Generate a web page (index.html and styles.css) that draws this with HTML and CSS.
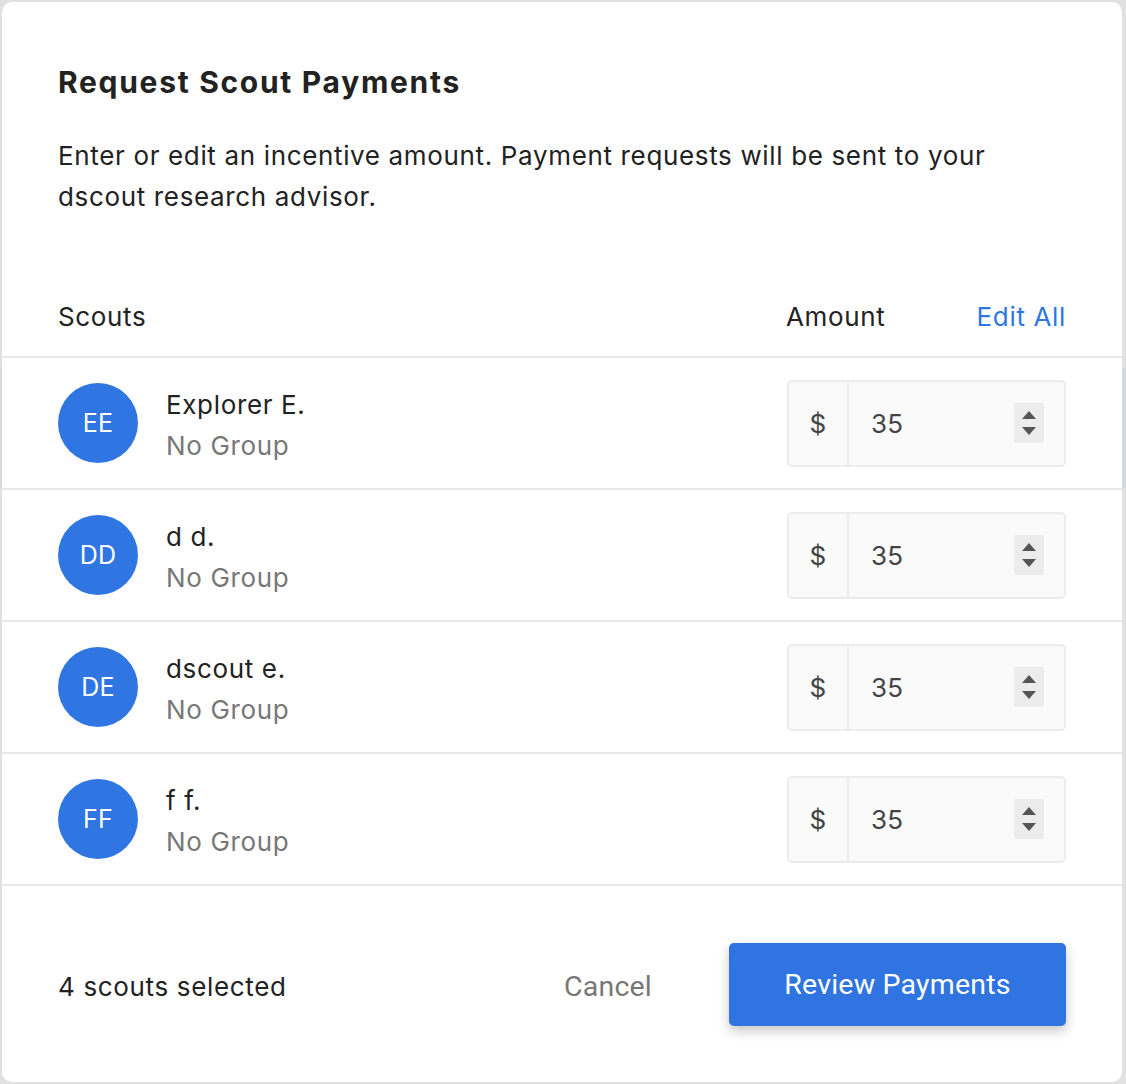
FILE: index.html
```html
<!DOCTYPE html>
<html lang="en">
<head>
<meta charset="utf-8">
<title>Request Scout Payments</title>
<link rel="stylesheet" href="styles.css">
</head>
<body>
<div class="modal">
  <div class="intro">
    <h1 class="title">Request Scout Payments</h1>
    <p class="desc">Enter or edit an incentive amount. Payment requests will be sent to your dscout research advisor.</p>
  </div>
  <div class="table-head">
    <span class="col-scouts">Scouts</span>
    <div class="col-amount">
      <span>Amount</span>
      <a class="edit-all" href="#">Edit All</a>
    </div>
  </div>
  <ul class="rows">
    <li class="row">
      <div class="avatar">EE</div>
      <div class="who"><div class="name">Explorer E.</div><div class="group">No Group</div></div>
      <div class="amount-input"><span class="prefix">$</span><span class="value">35</span><span class="spin"><i class="up"></i><i class="down"></i></span></div>
    </li>
    <li class="row">
      <div class="avatar">DD</div>
      <div class="who"><div class="name">d d.</div><div class="group">No Group</div></div>
      <div class="amount-input"><span class="prefix">$</span><span class="value">35</span><span class="spin"><i class="up"></i><i class="down"></i></span></div>
    </li>
    <li class="row">
      <div class="avatar">DE</div>
      <div class="who"><div class="name">dscout e.</div><div class="group">No Group</div></div>
      <div class="amount-input"><span class="prefix">$</span><span class="value">35</span><span class="spin"><i class="up"></i><i class="down"></i></span></div>
    </li>
    <li class="row">
      <div class="avatar">FF</div>
      <div class="who"><div class="name">f f.</div><div class="group">No Group</div></div>
      <div class="amount-input"><span class="prefix">$</span><span class="value">35</span><span class="spin"><i class="up"></i><i class="down"></i></span></div>
    </li>
  </ul>
  <div class="footer">
    <span class="selected">4 scouts selected</span>
    <div class="actions">
      <button class="cancel">Cancel</button>
      <button class="primary">Review Payments</button>
    </div>
  </div>
</div>
</body>
</html>
```

FILE: styles.css
```css
* { box-sizing: border-box; }
html, body { margin: 0; padding: 0; }
body {
  padding: 2px 4px 2px 2px;
  height: 1084px;
  background: linear-gradient(to bottom, #e1e1e1 0, #e1e1e1 368px, #d3d8e1 368px, #d3d8e1 488px, #e1e1e1 488px);
  font-family: Inter, "Noto Sans", sans-serif;
  color: #222;
  letter-spacing: 0.65px;
}
.modal {
  width: 1120px;
  height: 1080px;
  background: #fff;
  border-radius: 10px;
  overflow: hidden;
  display: flex;
  flex-direction: column;
}
.intro { padding: 62px 57px 0 56px; }
.title {
  margin: 0;
  font-size: 30px;
  line-height: 36px;
  font-weight: 700;
  color: #222;
  letter-spacing: 1.7px;
}
.desc {
  margin: 35px 0 0;
  font-size: 26px;
  line-height: 41px;
  color: #222;
  max-width: 960px;
}
.table-head {
  display: flex;
  justify-content: space-between;
  align-items: center;
  padding: 79px 56px 19px 56px;
  font-size: 26px;
  line-height: 41px;
}
.col-amount {
  width: 280px;
  display: flex;
  justify-content: space-between;
}
.edit-all { color: #2f78e4; text-decoration: none; }
.rows { list-style: none; margin: 0; padding: 0; }
.row {
  display: flex;
  align-items: center;
  height: 132px;
  border-top: 2px solid #e8e8e8;
  padding: 0 56px 0 56px;
}
.avatar {
  width: 80px;
  height: 80px;
  border-radius: 50%;
  background: #2f76e2;
  color: #fff;
  display: flex;
  align-items: center;
  justify-content: center;
  font-size: 25px;
  letter-spacing: 0.3px;
  flex: none;
}
.who { margin-left: 28px; padding-top: 3px; flex: 1; font-size: 26px; line-height: 41px; }
.name { color: #222; }
.group { color: #777; }
.amount-input {
  width: 279px;
  height: 87px;
  display: flex;
  align-items: center;
  border: 2px solid #ececec;
  border-radius: 5px;
  background: #fafafa;
  font-size: 26px;
  color: #444;
  letter-spacing: 0.3px;
}
.prefix {
  width: 60px;
  height: 100%;
  display: flex;
  align-items: center;
  justify-content: center;
  border-right: 2px solid #ececec;
}
.value { flex: 1; padding-left: 22px; }
.spin {
  width: 30px;
  height: 40px;
  margin-right: 20px;
  background: #ececec;
  border-radius: 2px;
  display: flex;
  flex-direction: column;
  align-items: center;
  justify-content: center;
  gap: 8px;
}
.spin i { width: 0; height: 0; border-left: 7.5px solid transparent; border-right: 7.5px solid transparent; }
.spin .up { border-bottom: 8px solid #555; }
.spin .down { border-top: 8px solid #555; }
.footer {
  flex: 1;
  border-top: 2px solid #e8e8e8;
  display: flex;
  align-items: center;
  justify-content: space-between;
  padding: 4px 56px 0 56px;
  font-size: 26px;
}
.actions { display: flex; align-items: center; gap: 77px; }
button { font-family: Roboto, "Noto Sans", sans-serif; font-size: 28.5px; letter-spacing: 0.2px; cursor: pointer; }
.cancel { background: none; border: 0; padding: 0; color: #777; }
.primary {
  width: 337px;
  height: 83px;
  margin-top: -4px;
  border: 0;
  border-radius: 5px;
  background: #2f74e0;
  color: #fff;
  box-shadow: 0 5px 12px rgba(0,0,0,0.22);
}
```
